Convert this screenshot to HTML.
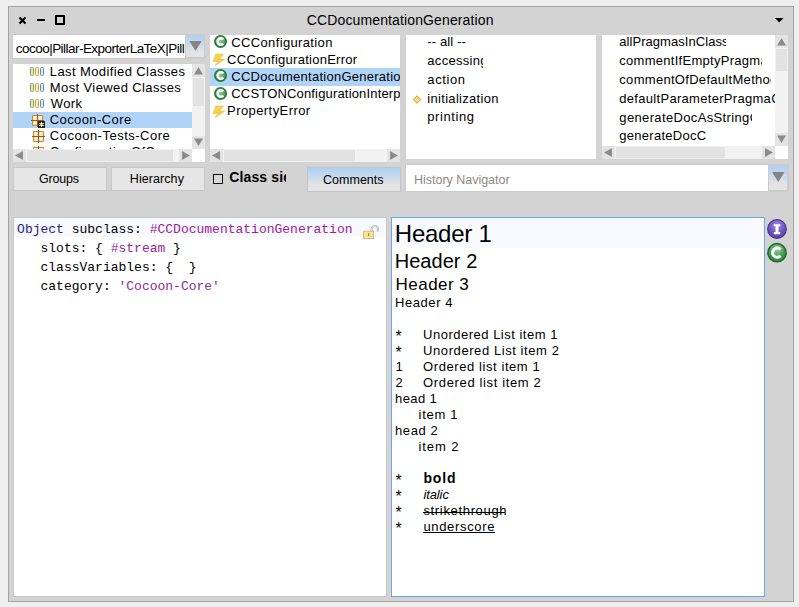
<!DOCTYPE html>
<html><head><meta charset="utf-8"><style>
html,body{margin:0;padding:0;width:799px;height:607px;overflow:hidden;background:#efefef}
body>div,body>svg,div>div,div>svg{position:absolute}
.t{line-height:0;white-space:pre}
</style></head><body>
<div style="left:0px;top:0px;width:799px;height:607px;background:#efefef;"></div>
<div style="left:8px;top:6px;width:786px;height:596px;background:#d3d3d3;box-sizing:border-box;border:1px solid #a3a3a3;"></div>
<svg style="left:0;top:0" width="120" height="34"><g stroke="#000" stroke-width="2.2" fill="none"><path d="M19.5 17.5 L25.5 23.5 M25.5 17.5 L19.5 23.5"/></g><rect x="37" y="19" width="8" height="2" fill="#000"/><rect x="55" y="15" width="10" height="10" fill="#000"/><rect x="57" y="17" width="6" height="6" fill="#d3d3d3"/></svg>
<svg style="left:770px;top:10px" width="20" height="20"><path d="M5 8 L13.5 8 L9.25 12.5 Z" fill="#000"/></svg>
<div style="left:12px;top:34px;width:193px;height:25px;background:#cbcbcb;"></div>
<div style="left:13px;top:35px;width:172px;height:23px;background:#fff;"></div>
<div style="left:186px;top:36px;width:18px;height:21px;background:linear-gradient(#acd0f4,#e4e4e4 75%);"></div>
<svg style="left:185px;top:35px" width="20" height="23"><path d="M4.3 5.9 L16.7 5.9 L10.5 16 Z" fill="#858585"/></svg>
<div style="left:13px;top:64px;width:192px;height:98px;background:#fff;"></div>
<div style="left:13px;top:112px;width:179px;height:16px;background:#b0d4f8;"></div>
<svg style="left:29px;top:67px" width="17" height="11"><rect x="1.5" y="0.5" width="3" height="8" rx="1" fill="#e6eaa0" stroke="#6aa58a"/><rect x="6.5" y="0.5" width="3" height="8" rx="1" fill="#fff0c4" stroke="#c8a02a"/><rect x="11.5" y="0.5" width="3" height="8" rx="1" fill="#dcecf0" stroke="#6088c8"/></svg>
<svg style="left:29px;top:83px" width="17" height="11"><rect x="1.5" y="0.5" width="3" height="8" rx="1" fill="#e6eaa0" stroke="#6aa58a"/><rect x="6.5" y="0.5" width="3" height="8" rx="1" fill="#fff0c4" stroke="#c8a02a"/><rect x="11.5" y="0.5" width="3" height="8" rx="1" fill="#dcecf0" stroke="#6088c8"/></svg>
<svg style="left:29px;top:99px" width="17" height="11"><rect x="1.5" y="0.5" width="3" height="8" rx="1" fill="#e6eaa0" stroke="#6aa58a"/><rect x="6.5" y="0.5" width="3" height="8" rx="1" fill="#fff0c4" stroke="#c8a02a"/><rect x="11.5" y="0.5" width="3" height="8" rx="1" fill="#dcecf0" stroke="#6088c8"/></svg>
<svg style="left:30px;top:113px" width="16" height="16"><defs><radialGradient id="gp30113" cx="0.5" cy="0.5" r="0.7"><stop offset="0" stop-color="#fff3d2"/><stop offset="1" stop-color="#efd3a8"/></radialGradient></defs><rect x="2.5" y="2.5" width="10" height="10" rx="0.8" fill="#f2dab2" stroke="#d5862c" stroke-width="1.1"/><rect x="3.3" y="3.3" width="3.6" height="3.6" fill="#fbeccc"/><rect x="8.2" y="3.3" width="3.6" height="3.6" fill="#fbeccc"/><rect x="3.3" y="8.2" width="3.6" height="3.6" fill="#fbeccc"/><rect x="8.2" y="8.2" width="3.6" height="3.6" fill="#fbeccc"/><path d="M7.5 1 V14 M1 7.5 H14" stroke="#8e5a2c" stroke-width="1"/><rect x="8" y="8" width="7" height="7" rx="0.6" fill="#2a1d12"/><path d="M11.5 9 V14 M9.3 10.2 L13.7 12.8 M13.7 10.2 L9.3 12.8" stroke="#fffcc8" stroke-width="1.1"/></svg>
<svg style="left:31px;top:129px" width="16" height="16"><defs><radialGradient id="gp31129" cx="0.5" cy="0.5" r="0.7"><stop offset="0" stop-color="#fff3d2"/><stop offset="1" stop-color="#efd3a8"/></radialGradient></defs><rect x="2.5" y="2.5" width="10" height="10" rx="0.8" fill="#f2dab2" stroke="#d5862c" stroke-width="1.1"/><rect x="3.3" y="3.3" width="3.6" height="3.6" fill="#fbeccc"/><rect x="8.2" y="3.3" width="3.6" height="3.6" fill="#fbeccc"/><rect x="3.3" y="8.2" width="3.6" height="3.6" fill="#fbeccc"/><rect x="8.2" y="8.2" width="3.6" height="3.6" fill="#fbeccc"/><path d="M7.5 1 V14 M1 7.5 H14" stroke="#8e5a2c" stroke-width="1"/></svg>
<svg style="left:31px;top:145px" width="16" height="16"><defs><radialGradient id="gp31145" cx="0.5" cy="0.5" r="0.7"><stop offset="0" stop-color="#fff3d2"/><stop offset="1" stop-color="#efd3a8"/></radialGradient></defs><rect x="2.5" y="2.5" width="10" height="10" rx="0.8" fill="#f2dab2" stroke="#d5862c" stroke-width="1.1"/><rect x="3.3" y="3.3" width="3.6" height="3.6" fill="#fbeccc"/><rect x="8.2" y="3.3" width="3.6" height="3.6" fill="#fbeccc"/><rect x="3.3" y="8.2" width="3.6" height="3.6" fill="#fbeccc"/><rect x="8.2" y="8.2" width="3.6" height="3.6" fill="#fbeccc"/><path d="M7.5 1 V14 M1 7.5 H14" stroke="#8e5a2c" stroke-width="1"/></svg>
<div style="left:192px;top:64px;width:13px;height:85px;background:#f2f2f2;"></div>
<div style="left:192px;top:64px;width:13px;height:13px;background:#e4e4e4;"></div>
<svg style="left:192px;top:64px" width="13" height="13"><path d="M2 10.5 L11 10.5 L6.5 3 Z" fill="#8c8c8c"/></svg>
<div style="left:193px;top:78px;width:11px;height:28px;background:#e2e2e2;"></div>
<div style="left:192px;top:136px;width:13px;height:13px;background:#e4e4e4;"></div>
<svg style="left:192px;top:136px" width="13" height="13"><path d="M2 2.5 L11 2.5 L6.5 10 Z" fill="#8c8c8c"/></svg>
<div style="left:13px;top:149px;width:179px;height:13px;background:#f2f2f2;"></div>
<div style="left:13px;top:149px;width:13px;height:13px;background:#e4e4e4;"></div>
<svg style="left:13px;top:149px" width="13" height="13"><path d="M10 2 L10 11 L2 6.5 Z" fill="#8c8c8c"/></svg>
<div style="left:27px;top:150px;width:146px;height:11px;background:#e2e2e2;"></div>
<div style="left:179px;top:149px;width:13px;height:13px;background:#e4e4e4;"></div>
<svg style="left:179px;top:149px" width="13" height="13"><path d="M3 2 L3 11 L11 6.5 Z" fill="#8c8c8c"/></svg>
<div style="left:210px;top:35px;width:190px;height:127px;background:#fff;"></div>
<div style="left:210px;top:68px;width:190px;height:18px;background:#b0d4f8;"></div>
<svg style="left:212px;top:34px" width="17" height="16"><defs><radialGradient id="gC34" cx="0.45" cy="0.4" r="0.6"><stop offset="0" stop-color="#8ccc96"/><stop offset="1" stop-color="#3a9048"/></radialGradient></defs><circle cx="8.5" cy="7.5" r="5.7" fill="url(#gC34)" stroke="#277a36" stroke-width="1.6"/><path d="M11.3 5.4 A3.2 3.2 0 1 0 11.3 9.6" fill="none" stroke="#fff" stroke-width="2.5"/></svg>
<svg style="left:212px;top:68px" width="17" height="16"><defs><radialGradient id="gC68" cx="0.45" cy="0.4" r="0.6"><stop offset="0" stop-color="#8ccc96"/><stop offset="1" stop-color="#3a9048"/></radialGradient></defs><circle cx="8.5" cy="7.5" r="5.7" fill="url(#gC68)" stroke="#277a36" stroke-width="1.6"/><path d="M11.3 5.4 A3.2 3.2 0 1 0 11.3 9.6" fill="none" stroke="#fff" stroke-width="2.5"/></svg>
<svg style="left:212px;top:86px" width="17" height="16"><defs><radialGradient id="gC86" cx="0.45" cy="0.4" r="0.6"><stop offset="0" stop-color="#8ccc96"/><stop offset="1" stop-color="#3a9048"/></radialGradient></defs><circle cx="8.5" cy="7.5" r="5.7" fill="url(#gC86)" stroke="#277a36" stroke-width="1.6"/><path d="M11.3 5.4 A3.2 3.2 0 1 0 11.3 9.6" fill="none" stroke="#fff" stroke-width="2.5"/></svg>
<svg style="left:212px;top:53px" width="14" height="14"><defs><linearGradient id="gb53" x1="0" y1="0" x2="1" y2="1"><stop offset="0" stop-color="#f7dc6a"/><stop offset="1" stop-color="#efc030"/></linearGradient></defs><path d="M3.8 1 L11.6 1 L7.6 6 L12.8 6.3 L3 12.6 L6.2 8.4 L1 8.6 Z" fill="url(#gb53)" stroke="#eab42a" stroke-width="0.5"/></svg>
<svg style="left:212px;top:105px" width="14" height="14"><defs><linearGradient id="gb105" x1="0" y1="0" x2="1" y2="1"><stop offset="0" stop-color="#f7dc6a"/><stop offset="1" stop-color="#efc030"/></linearGradient></defs><path d="M3.8 1 L11.6 1 L7.6 6 L12.8 6.3 L3 12.6 L6.2 8.4 L1 8.6 Z" fill="url(#gb105)" stroke="#eab42a" stroke-width="0.5"/></svg>
<div style="left:210px;top:149px;width:190px;height:13px;background:#f2f2f2;"></div>
<div style="left:210px;top:149px;width:13px;height:13px;background:#e4e4e4;"></div>
<svg style="left:210px;top:149px" width="13" height="13"><path d="M10 2 L10 11 L2 6.5 Z" fill="#8c8c8c"/></svg>
<div style="left:224px;top:150px;width:131px;height:11px;background:#e2e2e2;"></div>
<div style="left:387px;top:149px;width:13px;height:13px;background:#e4e4e4;"></div>
<svg style="left:387px;top:149px" width="13" height="13"><path d="M3 2 L3 11 L11 6.5 Z" fill="#8c8c8c"/></svg>
<div style="left:406px;top:35px;width:190px;height:124px;background:#fff;"></div>
<svg style="left:411px;top:94px" width="12" height="12"><path d="M6 1.8 L9.8 5.6 L6 9.4 L2.2 5.6 Z" fill="#f5d977" stroke="#c99a2c" stroke-width="0.9"/></svg>
<div style="left:602px;top:35px;width:186px;height:124px;background:#fff;"></div>
<div style="left:775px;top:35px;width:13px;height:111px;background:#f2f2f2;"></div>
<div style="left:775px;top:35px;width:13px;height:13px;background:#e4e4e4;"></div>
<svg style="left:775px;top:35px" width="13" height="13"><path d="M2 10.5 L11 10.5 L6.5 3 Z" fill="#8c8c8c"/></svg>
<div style="left:776px;top:49px;width:11px;height:22px;background:#e2e2e2;"></div>
<div style="left:775px;top:133px;width:13px;height:13px;background:#e4e4e4;"></div>
<svg style="left:775px;top:133px" width="13" height="13"><path d="M2 2.5 L11 2.5 L6.5 10 Z" fill="#8c8c8c"/></svg>
<div style="left:602px;top:146px;width:173px;height:13px;background:#f2f2f2;"></div>
<div style="left:602px;top:146px;width:13px;height:13px;background:#e4e4e4;"></div>
<svg style="left:602px;top:146px" width="13" height="13"><path d="M10 2 L10 11 L2 6.5 Z" fill="#8c8c8c"/></svg>
<div style="left:616px;top:147px;width:109px;height:11px;background:#e2e2e2;"></div>
<div style="left:762px;top:146px;width:13px;height:13px;background:#e4e4e4;"></div>
<svg style="left:762px;top:146px" width="13" height="13"><path d="M3 2 L3 11 L11 6.5 Z" fill="#8c8c8c"/></svg>
<div style="left:13px;top:167px;width:94px;height:24px;background:#e6e6e6;box-sizing:border-box;border:1px solid #c8c8c8;"></div>
<div style="left:111px;top:167px;width:94px;height:24px;background:#e6e6e6;box-sizing:border-box;border:1px solid #c8c8c8;"></div>
<div style="left:213px;top:174px;width:10px;height:10px;background:#d9d9d9;box-sizing:border-box;border:1px solid #111;"></div>
<div style="left:307px;top:167px;width:94px;height:25px;box-sizing:border-box;border:1px solid #c4c4c4;background:linear-gradient(#acd0f4,#e4e4e4 75%);"></div>
<div style="left:405px;top:164px;width:384px;height:28px;background:#cbcbcb;"></div>
<div style="left:406px;top:165px;width:362px;height:26px;background:#fff;"></div>
<div style="left:769px;top:166px;width:18px;height:24px;background:linear-gradient(#acd0f4,#e4e4e4 75%);"></div>
<svg style="left:768px;top:165px" width="20" height="26"><path d="M4 7 L16.5 7 L10.25 17 Z" fill="#858585"/></svg>
<div style="left:13px;top:217px;width:374px;height:380px;background:#c8c8c8;"></div>
<div style="left:14px;top:218px;width:372px;height:378px;background:#fff;"></div>
<div style="left:14px;top:218px;width:371px;height:19px;background:#f7f9fc;"></div>
<svg style="left:360px;top:222px" width="22" height="20"><path d="M11.6 9.5 V7.2 A3.2 3.2 0 0 1 18 7.2 V9.6" fill="none" stroke="#b4b4b4" stroke-width="2.2"/><path d="M11.6 9.5 V7.2 A3.2 3.2 0 0 1 18 7.2 V9.6" fill="none" stroke="#ececec" stroke-width="0.8"/><rect x="3.6" y="9.2" width="10" height="7.4" fill="#f8e38c" stroke="#c9b27e" stroke-width="0.8"/><rect x="8" y="11.4" width="1.2" height="2.6" fill="#7a7a90"/></svg>
<div style="left:391px;top:217px;width:374px;height:380px;background:#fff;box-sizing:border-box;border:1px solid #6aa6e6;"></div>
<div style="left:392px;top:218px;width:372px;height:30px;background:#f8fafd;"></div>
<div style="left:423px;top:512px;width:82px;height:1px;background:#000;"></div>
<svg style="left:766px;top:218px" width="22" height="22"><defs><radialGradient id="gI" cx="0.5" cy="0.3" r="0.7"><stop offset="0" stop-color="#a08ee0"/><stop offset="0.6" stop-color="#6f58bc"/><stop offset="1" stop-color="#5840a6"/></radialGradient></defs><circle cx="11" cy="11" r="9.3" fill="url(#gI)" stroke="#4a3494" stroke-width="1.2"/><path d="M7.8 7.2 H14.2 M7.8 15.1 H14.2" stroke="#fff" stroke-width="2.1" fill="none"/><path d="M11 7 V15.3" stroke="#fff" stroke-width="3" fill="none"/></svg>
<svg style="left:766px;top:242px" width="22" height="22"><defs><radialGradient id="gC2" cx="0.5" cy="0.3" r="0.7"><stop offset="0" stop-color="#9ad0a0"/><stop offset="0.6" stop-color="#4a9a56"/><stop offset="1" stop-color="#2f8a40"/></radialGradient></defs><circle cx="11" cy="10.7" r="9.1" fill="url(#gC2)" stroke="#1f6e2e" stroke-width="1.6"/><path d="M14.6 7.6 A4.6 4.6 0 1 0 14.6 13.8" fill="none" stroke="#fff" stroke-width="3"/></svg>
<div class="t" style="font-family:'Liberation Sans';font-size:14px;font-weight:400;font-style:normal;color:#000;letter-spacing:0.125px;top:20.00px;left:306.80px;">CCDocumentationGeneration</div>
<div style="left:13px;top:0px;width:172px;height:607px;overflow:hidden"><div style="position:absolute;left:-13px;top:0px;width:799px;height:607px"><div class="t" style="font-family:'Liberation Sans';font-size:13.5px;font-weight:400;font-style:normal;color:#000;letter-spacing:-0.533px;top:49.00px;left:15.80px;">cocoo|Pillar-ExporterLaTeX|Pill</div></div></div>
<div style="left:13px;top:64px;width:179px;height:85px;overflow:hidden"><div style="position:absolute;left:-13px;top:-64px;width:799px;height:607px"><div class="t" style="font-family:'Liberation Sans';font-size:13px;font-weight:400;font-style:normal;color:#000;letter-spacing:0.400px;top:72.00px;left:49.80px;">Last Modified Classes</div></div></div>
<div style="left:13px;top:64px;width:179px;height:85px;overflow:hidden"><div style="position:absolute;left:-13px;top:-64px;width:799px;height:607px"><div class="t" style="font-family:'Liberation Sans';font-size:13px;font-weight:400;font-style:normal;color:#000;letter-spacing:0.389px;top:88.00px;left:49.80px;">Most Viewed Classes</div></div></div>
<div style="left:13px;top:64px;width:179px;height:85px;overflow:hidden"><div style="position:absolute;left:-13px;top:-64px;width:799px;height:607px"><div class="t" style="font-family:'Liberation Sans';font-size:13px;font-weight:400;font-style:normal;color:#000;letter-spacing:0.333px;top:104.00px;left:50.80px;">Work</div></div></div>
<div style="left:13px;top:64px;width:179px;height:85px;overflow:hidden"><div style="position:absolute;left:-13px;top:-64px;width:799px;height:607px"><div class="t" style="font-family:'Liberation Sans';font-size:13px;font-weight:400;font-style:normal;color:#000;letter-spacing:0.400px;top:120.00px;left:49.80px;">Cocoon-Core</div></div></div>
<div style="left:13px;top:64px;width:179px;height:85px;overflow:hidden"><div style="position:absolute;left:-13px;top:-64px;width:799px;height:607px"><div class="t" style="font-family:'Liberation Sans';font-size:13px;font-weight:400;font-style:normal;color:#000;letter-spacing:0.500px;top:136.00px;left:49.80px;">Cocoon-Tests-Core</div></div></div>
<div style="left:13px;top:64px;width:179px;height:85px;overflow:hidden"><div style="position:absolute;left:-13px;top:-64px;width:799px;height:607px"><div class="t" style="font-family:'Liberation Sans';font-size:13px;font-weight:400;font-style:normal;color:#000;letter-spacing:0.300px;top:152.00px;left:49.80px;">ConfigurationOfCocoon</div></div></div>
<div style="left:210px;top:35px;width:190px;height:114px;overflow:hidden"><div style="position:absolute;left:-210px;top:-35px;width:799px;height:607px"><div class="t" style="font-family:'Liberation Sans';font-size:13px;font-weight:400;font-style:normal;color:#000;letter-spacing:0.357px;top:43.00px;left:231.30px;">CCConfiguration</div></div></div>
<div style="left:210px;top:35px;width:190px;height:114px;overflow:hidden"><div style="position:absolute;left:-210px;top:-35px;width:799px;height:607px"><div class="t" style="font-family:'Liberation Sans';font-size:13px;font-weight:400;font-style:normal;color:#000;letter-spacing:0.263px;top:60.00px;left:227.10px;">CCConfigurationError</div></div></div>
<div style="left:210px;top:35px;width:190px;height:114px;overflow:hidden"><div style="position:absolute;left:-210px;top:-35px;width:799px;height:607px"><div class="t" style="font-family:'Liberation Sans';font-size:13px;font-weight:400;font-style:normal;color:#000;letter-spacing:0.260px;top:77.00px;left:231.30px;">CCDocumentationGeneration</div></div></div>
<div style="left:210px;top:35px;width:190px;height:114px;overflow:hidden"><div style="position:absolute;left:-210px;top:-35px;width:799px;height:607px"><div class="t" style="font-family:'Liberation Sans';font-size:13px;font-weight:400;font-style:normal;color:#000;letter-spacing:0.170px;top:94.00px;left:231.30px;">CCSTONConfigurationInterpreter</div></div></div>
<div style="left:210px;top:35px;width:190px;height:114px;overflow:hidden"><div style="position:absolute;left:-210px;top:-35px;width:799px;height:607px"><div class="t" style="font-family:'Liberation Sans';font-size:13px;font-weight:400;font-style:normal;color:#000;letter-spacing:0.417px;top:111.00px;left:227.10px;">PropertyError</div></div></div>
<div style="left:406px;top:35px;width:190px;height:124px;overflow:hidden"><div style="position:absolute;left:-406px;top:-35px;width:799px;height:607px"><div class="t" style="font-family:'Liberation Sans';font-size:13px;font-weight:400;font-style:normal;color:#000;letter-spacing:0.125px;top:42.00px;left:427.30px;">-- all --</div></div></div>
<div style="left:406px;top:35px;width:77px;height:124px;overflow:hidden"><div style="position:absolute;left:-406px;top:-35px;width:799px;height:607px"><div class="t" style="font-family:'Liberation Sans';font-size:13px;font-weight:400;font-style:normal;color:#000;letter-spacing:0.300px;top:61.00px;left:427.30px;">accessing</div></div></div>
<div style="left:406px;top:35px;width:190px;height:124px;overflow:hidden"><div style="position:absolute;left:-406px;top:-35px;width:799px;height:607px"><div class="t" style="font-family:'Liberation Sans';font-size:13px;font-weight:400;font-style:normal;color:#000;letter-spacing:0.600px;top:80.00px;left:427.30px;">action</div></div></div>
<div style="left:406px;top:35px;width:190px;height:124px;overflow:hidden"><div style="position:absolute;left:-406px;top:-35px;width:799px;height:607px"><div class="t" style="font-family:'Liberation Sans';font-size:13px;font-weight:400;font-style:normal;color:#000;letter-spacing:0.308px;top:99.00px;left:427.30px;">initialization</div></div></div>
<div style="left:406px;top:35px;width:190px;height:124px;overflow:hidden"><div style="position:absolute;left:-406px;top:-35px;width:799px;height:607px"><div class="t" style="font-family:'Liberation Sans';font-size:13px;font-weight:400;font-style:normal;color:#000;letter-spacing:0.571px;top:117.00px;left:427.30px;">printing</div></div></div>
<div style="left:602px;top:35px;width:123.5px;height:111px;overflow:hidden"><div style="position:absolute;left:-602px;top:-35px;width:799px;height:607px"><div class="t" style="font-family:'Liberation Sans';font-size:13px;font-weight:400;font-style:normal;color:#000;letter-spacing:0.050px;top:42.00px;left:619.30px;">allPragmasInClass</div></div></div>
<div style="left:602px;top:35px;width:160px;height:111px;overflow:hidden"><div style="position:absolute;left:-602px;top:-35px;width:799px;height:607px"><div class="t" style="font-family:'Liberation Sans';font-size:13px;font-weight:400;font-style:normal;color:#000;letter-spacing:0.280px;top:61.00px;left:619.30px;">commentIfEmptyPragma</div></div></div>
<div style="left:602px;top:35px;width:169px;height:111px;overflow:hidden"><div style="position:absolute;left:-602px;top:-35px;width:799px;height:607px"><div class="t" style="font-family:'Liberation Sans';font-size:13px;font-weight:400;font-style:normal;color:#000;letter-spacing:0.300px;top:80.00px;left:619.30px;">commentOfDefaultMethod</div></div></div>
<div style="left:602px;top:35px;width:173px;height:111px;overflow:hidden"><div style="position:absolute;left:-602px;top:-35px;width:799px;height:607px"><div class="t" style="font-family:'Liberation Sans';font-size:13px;font-weight:400;font-style:normal;color:#000;letter-spacing:0.300px;top:98.50px;left:619.30px;">defaultParameterPragmaComment</div></div></div>
<div style="left:602px;top:35px;width:150px;height:111px;overflow:hidden"><div style="position:absolute;left:-602px;top:-35px;width:799px;height:607px"><div class="t" style="font-family:'Liberation Sans';font-size:13px;font-weight:400;font-style:normal;color:#000;letter-spacing:0.360px;top:117.50px;left:619.30px;">generateDocAsStringOn</div></div></div>
<div style="left:602px;top:35px;width:173px;height:111px;overflow:hidden"><div style="position:absolute;left:-602px;top:-35px;width:799px;height:607px"><div class="t" style="font-family:'Liberation Sans';font-size:13px;font-weight:400;font-style:normal;color:#000;letter-spacing:0.270px;top:136.00px;left:619.30px;">generateDocC</div></div></div>
<div class="t" style="font-family:'Liberation Sans';font-size:12.5px;font-weight:400;font-style:normal;color:#000;letter-spacing:-0.200px;top:179.00px;left:39.10px;">Groups</div>
<div class="t" style="font-family:'Liberation Sans';font-size:12.5px;font-weight:400;font-style:normal;color:#000;letter-spacing:0.075px;top:179.00px;left:129.80px;">Hierarchy</div>
<div style="left:229px;top:0px;width:57px;height:607px;overflow:hidden"><div style="position:absolute;left:-229px;top:0px;width:799px;height:607px"><div class="t" style="font-family:'Liberation Sans';font-size:14px;font-weight:700;font-style:normal;color:#000;letter-spacing:0.150px;top:177.00px;left:229.20px;">Class sid</div></div></div>
<div class="t" style="font-family:'Liberation Sans';font-size:12.5px;font-weight:400;font-style:normal;color:#000;letter-spacing:0.000px;top:179.50px;left:323.10px;">Comments</div>
<div class="t" style="font-family:'Liberation Sans';font-size:12.5px;font-weight:400;font-style:normal;color:#8f8882;letter-spacing:-0.025px;top:179.50px;left:414.10px;">History Navigator</div>
<div class="t" style="font-family:'Liberation Mono';font-size:13px;font-weight:400;font-style:normal;color:#1d1d8e;letter-spacing:0.000px;top:229.50px;left:17.10px;">Object</div>
<div class="t" style="font-family:'Liberation Mono';font-size:13px;font-weight:400;font-style:normal;color:#000;letter-spacing:0.000px;top:229.50px;left:63.90px;"> subclass: </div>
<div class="t" style="font-family:'Liberation Mono';font-size:13px;font-weight:400;font-style:normal;color:#9a2496;letter-spacing:0.000px;top:229.50px;left:149.70px;">#CCDocumentationGeneration</div>
<div class="t" style="font-family:'Liberation Mono';font-size:13px;font-weight:400;font-style:normal;color:#000;letter-spacing:0.000px;top:248.50px;left:40.50px;">slots: { </div>
<div class="t" style="font-family:'Liberation Mono';font-size:13px;font-weight:400;font-style:normal;color:#9a2496;letter-spacing:0.000px;top:248.50px;left:110.70px;">#stream</div>
<div class="t" style="font-family:'Liberation Mono';font-size:13px;font-weight:400;font-style:normal;color:#000;letter-spacing:0.000px;top:248.50px;left:165.30px;"> }</div>
<div class="t" style="font-family:'Liberation Mono';font-size:13px;font-weight:400;font-style:normal;color:#000;letter-spacing:0.000px;top:267.50px;left:40.50px;">classVariables: {  }</div>
<div class="t" style="font-family:'Liberation Mono';font-size:13px;font-weight:400;font-style:normal;color:#000;letter-spacing:0.000px;top:286.50px;left:40.50px;">category: </div>
<div class="t" style="font-family:'Liberation Mono';font-size:13px;font-weight:400;font-style:normal;color:#8f2a8f;letter-spacing:0.000px;top:286.50px;left:118.50px;">'Cocoon-Core'</div>
<div class="t" style="font-family:'Liberation Sans';font-size:24px;font-weight:400;font-style:normal;color:#000;letter-spacing:-0.250px;top:234.00px;left:394.80px;">Header 1</div>
<div class="t" style="font-family:'Liberation Sans';font-size:20px;font-weight:400;font-style:normal;color:#000;letter-spacing:0.043px;top:261.00px;left:394.70px;">Header 2</div>
<div class="t" style="font-family:'Liberation Sans';font-size:17px;font-weight:400;font-style:normal;color:#000;letter-spacing:0.457px;top:285.00px;left:395.60px;">Header 3</div>
<div class="t" style="font-family:'Liberation Sans';font-size:13px;font-weight:400;font-style:normal;color:#000;letter-spacing:0.571px;top:303.00px;left:395.00px;">Header 4</div>
<div class="t" style="font-family:'Liberation Sans';font-size:16px;font-weight:400;font-style:normal;color:#000;letter-spacing:0.000px;top:337.00px;left:395.60px;">*</div>
<div class="t" style="font-family:'Liberation Sans';font-size:13px;font-weight:400;font-style:normal;color:#000;letter-spacing:0.500px;top:335.00px;left:423.10px;">Unordered List item 1</div>
<div class="t" style="font-family:'Liberation Sans';font-size:16px;font-weight:400;font-style:normal;color:#000;letter-spacing:0.000px;top:353.00px;left:395.60px;">*</div>
<div class="t" style="font-family:'Liberation Sans';font-size:13px;font-weight:400;font-style:normal;color:#000;letter-spacing:0.575px;top:351.00px;left:423.10px;">Unordered List item 2</div>
<div class="t" style="font-family:'Liberation Sans';font-size:13px;font-weight:400;font-style:normal;color:#000;letter-spacing:0.000px;top:367.00px;left:395.40px;">1</div>
<div class="t" style="font-family:'Liberation Sans';font-size:13px;font-weight:400;font-style:normal;color:#000;letter-spacing:0.578px;top:367.00px;left:423.10px;">Ordered list item 1</div>
<div class="t" style="font-family:'Liberation Sans';font-size:13px;font-weight:400;font-style:normal;color:#000;letter-spacing:0.000px;top:383.00px;left:395.40px;">2</div>
<div class="t" style="font-family:'Liberation Sans';font-size:13px;font-weight:400;font-style:normal;color:#000;letter-spacing:0.639px;top:383.00px;left:423.10px;">Ordered list item 2</div>
<div class="t" style="font-family:'Liberation Sans';font-size:13px;font-weight:400;font-style:normal;color:#000;letter-spacing:0.400px;top:399.00px;left:395.00px;">head 1</div>
<div class="t" style="font-family:'Liberation Sans';font-size:13px;font-weight:400;font-style:normal;color:#000;letter-spacing:0.700px;top:415.00px;left:418.60px;">item 1</div>
<div class="t" style="font-family:'Liberation Sans';font-size:13px;font-weight:400;font-style:normal;color:#000;letter-spacing:0.600px;top:431.00px;left:395.00px;">head 2</div>
<div class="t" style="font-family:'Liberation Sans';font-size:13px;font-weight:400;font-style:normal;color:#000;letter-spacing:0.880px;top:447.00px;left:418.60px;">item 2</div>
<div class="t" style="font-family:'Liberation Sans';font-size:16px;font-weight:400;font-style:normal;color:#000;letter-spacing:0.000px;top:481.00px;left:395.60px;">*</div>
<div class="t" style="font-family:'Liberation Sans';font-size:14px;font-weight:700;font-style:normal;color:#000;letter-spacing:0.833px;top:478.00px;left:423.40px;">bold</div>
<div class="t" style="font-family:'Liberation Sans';font-size:16px;font-weight:400;font-style:normal;color:#000;letter-spacing:0.000px;top:497.00px;left:395.60px;">*</div>
<div class="t" style="font-family:'Liberation Sans';font-size:13px;font-weight:400;font-style:italic;color:#000;letter-spacing:-0.100px;top:495.00px;left:423.40px;">italic</div>
<div class="t" style="font-family:'Liberation Sans';font-size:16px;font-weight:400;font-style:normal;color:#000;letter-spacing:0.000px;top:513.00px;left:395.60px;">*</div>
<div class="t" style="font-family:'Liberation Sans';font-size:13px;font-weight:400;font-style:normal;color:#000;letter-spacing:0.667px;top:511.00px;left:423.40px;">strikethrough</div>
<div class="t" style="font-family:'Liberation Sans';font-size:16px;font-weight:400;font-style:normal;color:#000;letter-spacing:0.000px;top:529.00px;left:395.60px;">*</div>
<div class="t" style="font-family:'Liberation Sans';font-size:13px;font-weight:400;font-style:normal;color:#000;letter-spacing:0.667px;top:527.00px;text-decoration:underline;left:423.40px;">underscore</div>
</body></html>
